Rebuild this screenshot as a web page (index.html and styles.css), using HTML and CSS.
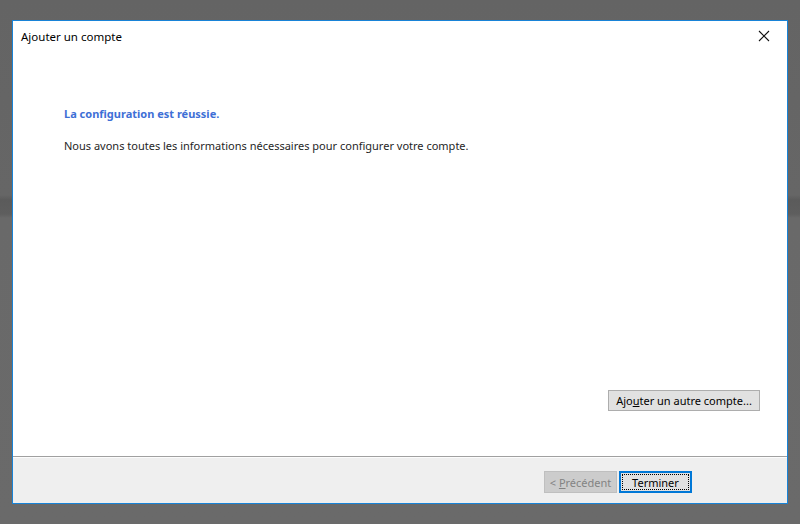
FILE: index.html
```html
<!DOCTYPE html>
<html lang="fr">
<head>
    <meta charset="UTF-8">
    <title>Ajouter un compte</title>
    <link rel="stylesheet" href="styles.css">
</head>
<body>
    <div class="dialog">
        <div class="titlebar">
            <span class="title">Ajouter un compte</span>
            <button class="close-btn" aria-label="Fermer">
                <svg width="12" height="12" viewBox="0 0 12 12">
                    <path d="M1 1 L11 11 M11 1 L1 11" stroke="#111" stroke-width="1.1" fill="none"/>
                </svg>
            </button>
        </div>

        <div class="content">
            <h2 class="status">La configuration est réussie.</h2>
            <p class="message">Nous avons toutes les informations nécessaires pour configurer votre compte.</p>
            <div class="extra-row">
                <button class="btn">Ajo<u>u</u>ter un autre compte...</button>
            </div>
        </div>

        <div class="footer">
            <button class="btn btn-disabled" disabled>&lt; <u>P</u>récédent</button>
            <button class="btn btn-default"><span class="focus-ring">Terminer</span></button>
        </div>
    </div>
</body>
</html>
```

FILE: styles.css
```css
* {
    margin: 0;
    padding: 0;
    box-sizing: border-box;
}

body {
    width: 800px;
    height: 524px;
    overflow: hidden;
    font-family: "Noto Sans", "Liberation Sans", sans-serif;
    font-size: 11px;
    background: linear-gradient(to bottom, #646464 0, #666666 195px, #5b5b5b 200px, #5e5e5e 214px, #696969 218px, #6a6a6a 100%);
    padding: 20px 0 0 12px;
}

.dialog {
    width: 776px;
    height: 484px;
    background-color: white;
    border: 1px solid #1883d7;
    display: flex;
    flex-direction: column;
}

.titlebar {
    height: 30px;
    display: flex;
    justify-content: space-between;
    align-items: center;
    padding-left: 8px;
    color: #000;
}

.title {
    font-size: 11.5px;
}

.close-btn {
    width: 46px;
    height: 30px;
    border: none;
    background: transparent;
    display: flex;
    align-items: center;
    justify-content: center;
}

.content {
    flex: 1;
    display: flex;
    flex-direction: column;
    padding: 55px 27px 45px 51px;
    border-bottom: 1px solid #a0a0a0;
}

.status {
    font-size: 11px;
    font-weight: 700;
    line-height: 16px;
    color: #3e6fd6;
    margin-bottom: 16px;
}

.message {
    line-height: 16px;
    color: #262626;
}

.extra-row {
    margin-top: auto;
    display: flex;
    justify-content: flex-end;
}

.btn {
    font-family: inherit;
    font-size: 11px;
    color: #000;
    background-color: #e1e1e1;
    border: 1px solid #adadad;
    height: 21px;
    padding: 0;
    white-space: nowrap;
}

.extra-row .btn {
    width: 152px;
}

.footer {
    height: 46px;
    background-color: #efefef;
    border-top: 1px solid #fcfcfc;
    display: flex;
    justify-content: flex-end;
    align-items: flex-start;
    gap: 2px;
    padding: 13px 95px 0 0;
}

.footer .btn {
    width: 73px;
    height: 22px;
}

.btn-disabled {
    background-color: #cccccc;
    border-color: #bfbfbf;
    color: #838383;
}

.btn-default {
    border: 2px solid #0078d7;
    padding: 1px;
}

.focus-ring {
    display: flex;
    align-items: center;
    justify-content: center;
    height: 100%;
    border: 1px dotted #000;
}
```
